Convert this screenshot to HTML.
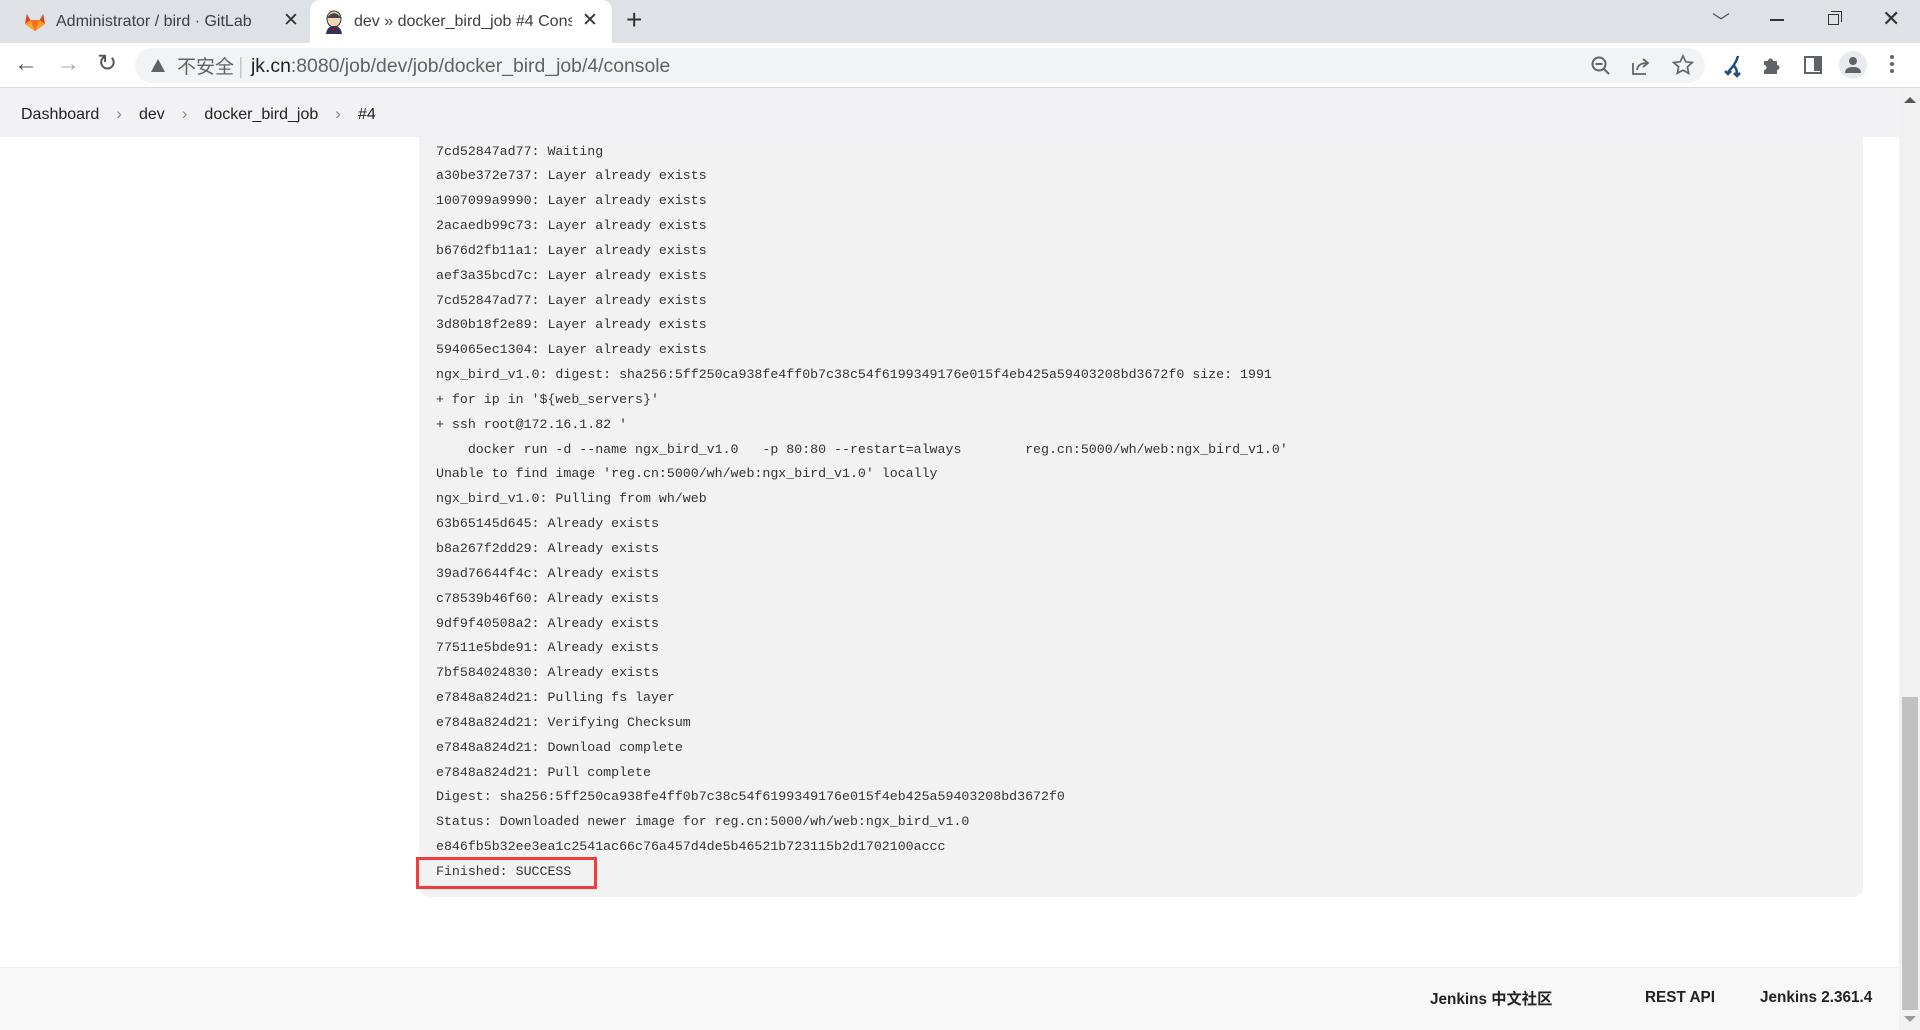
<!DOCTYPE html>
<html><head><meta charset="utf-8"><style>
*{margin:0;padding:0;box-sizing:border-box}
body{width:1920px;height:1030px;overflow:hidden;background:#fff;font-family:"Liberation Sans","Noto Sans CJK SC",sans-serif;position:relative}
.abs{position:absolute}
#tabs{left:0;top:0;width:1920px;height:43px;background:#dee1e6}
.tab{top:0;height:43px;font-size:16px;color:#3c4043;display:flex;align-items:center}
#atab{left:310px;width:302px;top:0;height:43px;background:#fff;border-radius:10px 10px 0 0}
#bar{left:0;top:43px;width:1920px;height:45px;background:#fff;border-bottom:1px solid #dadce0}
#omni{left:135px;top:48px;width:1570px;height:35px;background:#f1f3f4;border-radius:18px}
#crumb{left:0;top:88px;width:1900px;height:49px;background:#f2f2f5;font-size:16px;color:#222}
#console{left:419px;top:137px;width:1444px;height:760px;background:#f2f2f2;border-radius:0 0 10px 10px}
pre{position:absolute;left:436px;top:139.5px;font-family:"Liberation Mono","DejaVu Sans Mono",monospace;font-size:13.28px;line-height:24.85px;color:#333}
#footer{left:0;top:967px;width:1900px;height:63px;background:#f8f8f8;border-top:1px solid #eee}
.ft{font-weight:bold;font-size:15.3px;color:#222;top:989px}
#sb{left:1899px;top:88px;width:21px;height:942px;background:#f1f1f1}
#thumb{left:1902px;top:697px;width:16px;height:313px;background:#c1c1c1}
.sep{color:#888;margin:0 17px;font-size:17px}
</style></head><body>
<div id="tabs" class="abs"></div>
<div class="abs tab" style="left:24px;top:10px;height:24px">
<svg width="22" height="20" viewBox="0 0 24 22"><path d="M12 21 L1 13 L3 2 L7 9 H17 L21 2 L23 13Z" fill="#e24329"/><path d="M12 21 L7 9 H17Z" fill="#fc6d26"/><path d="M1 13 L7 9 L12 21Z" fill="#fca326"/><path d="M23 13 L17 9 L12 21Z" fill="#fca326"/></svg>
<span style="margin-left:10px">Administrator / bird · GitLab</span></div>
<div class="abs" style="left:283px;top:9px;font-size:19px;color:#333">✕</div>
<div id="atab" class="abs"></div>
<div class="abs tab" style="left:324px;top:0">
<svg width="20" height="24" viewBox="0 0 20 24"><ellipse cx="10" cy="9" rx="7" ry="8" fill="#f0d6b7" stroke="#333" stroke-width="1"/><path d="M3 8 Q10 -2 17 8" fill="#444"/><path d="M2 24 Q3 16 10 16 Q17 16 18 24Z" fill="#335"/><path d="M8 18 L12 18 L10 21Z" fill="#c00"/></svg>
<span style="margin-left:10px;width:218px;overflow:hidden;white-space:nowrap">dev » docker_bird_job #4 Console</span></div>
<div class="abs" style="left:582px;top:9px;font-size:19px;color:#333">✕</div>
<div class="abs" style="left:626px;top:4px;font-size:28px;color:#333">+</div>
<div class="abs" style="left:1712px;top:8px;font-size:18px;color:#555">﹀</div>
<div class="abs" style="left:1770px;top:19px;width:14px;height:1.5px;background:#333"></div>
<div class="abs" style="left:1828px;top:14px;width:11px;height:11px;border:1.5px solid #333"></div>
<div class="abs" style="left:1831px;top:11px;width:11px;height:11px;border-top:1.5px solid #333;border-right:1.5px solid #333"></div>
<div class="abs" style="left:1882px;top:6px;font-size:22px;color:#333">✕</div>
<div id="bar" class="abs"></div>
<div class="abs" style="left:14px;top:50px;font-size:24px;color:#555">←</div>
<div class="abs" style="left:56px;top:50px;font-size:24px;color:#aaa">→</div>
<div class="abs" style="left:97px;top:49px;font-size:24px;color:#555">↻</div>
<div id="omni" class="abs"></div>
<svg class="abs" style="left:150px;top:58px" width="16" height="15" viewBox="0 0 16 15"><path d="M8 1L15 14H1Z" fill="#5f6368"/></svg>
<div class="abs" style="left:177px;top:54px;font-size:19px;color:#5f6368;font-family:'Noto Sans CJK SC',sans-serif;line-height:24px">不安全 <span style="color:#bbb">|</span></div>
<div class="abs" style="left:251px;top:54px;font-size:19.4px;color:#202124;line-height:24px">jk.cn<span style="color:#5f6368">:8080/job/dev/job/docker_bird_job/4/console</span></div>
<svg class="abs" style="left:1590px;top:55px" width="22" height="22" viewBox="0 0 22 22" fill="none" stroke="#5f6368" stroke-width="2"><circle cx="9" cy="9" r="6.5"/><path d="M5.5 9h7M14 14l5 5"/></svg>
<svg class="abs" style="left:1630px;top:55px" width="22" height="22" viewBox="0 0 22 22" fill="none" stroke="#5f6368" stroke-width="1.8"><path d="M3 8v11h13M7 15q1-7 10-7M13 4l5 4-5 4"/></svg>
<svg class="abs" style="left:1672px;top:54px" width="22" height="22" viewBox="0 0 24 24" fill="none" stroke="#5f6368" stroke-width="1.8"><path d="M12 2l3 6.5 7 .8-5.2 4.8 1.4 7L12 17.6 5.8 21l1.4-7L2 9.3l7-.8z"/></svg>
<svg class="abs" style="left:1722px;top:54px" width="22" height="24" viewBox="0 0 22 24" fill="none" stroke="#1e4f7a" stroke-width="2.5"><path d="M16 2 Q14 10 6 18M11 11 Q15 14 15 20M3 17l3 3 3-3M12 19l3 3 3-3"/></svg>
<svg class="abs" style="left:1762px;top:55px" width="20" height="20" viewBox="0 0 20 20" fill="#5f6368"><path d="M2 6h4a2.5 2.5 0 015 0h4v4a2.5 2.5 0 010 5v4H2v-4a2.5 2.5 0 000-5z"/></svg>
<div class="abs" style="left:1804px;top:56px;width:18px;height:18px;border:2.5px solid #5f6368"><div style="margin-left:8px;width:6px;height:13px;background:#5f6368"></div></div>
<div class="abs" style="left:1839px;top:51px;width:28px;height:28px;border-radius:50%;background:#e8eaed"></div>
<svg class="abs" style="left:1843px;top:55px" width="20" height="20" viewBox="0 0 20 20" fill="#5f6368"><circle cx="10" cy="6" r="4"/><path d="M2 18q0-6 8-6t8 6z"/></svg>
<div class="abs" style="left:1890px;top:55px;width:4px;height:4px;border-radius:2px;background:#5f6368;box-shadow:0 7px 0 #5f6368,0 14px 0 #5f6368"></div>
<div id="crumb" class="abs"></div>
<div class="abs" style="left:21px;top:104px;font-size:16px;color:#222">Dashboard<span class="sep">›</span>dev<span class="sep">›</span>docker_bird_job<span class="sep">›</span>#4</div>
<div id="console" class="abs"></div>
<pre>7cd52847ad77: Waiting
a30be372e737: Layer already exists
1007099a9990: Layer already exists
2acaedb99c73: Layer already exists
b676d2fb11a1: Layer already exists
aef3a35bcd7c: Layer already exists
7cd52847ad77: Layer already exists
3d80b18f2e89: Layer already exists
594065ec1304: Layer already exists
ngx_bird_v1.0: digest: sha256:5ff250ca938fe4ff0b7c38c54f6199349176e015f4eb425a59403208bd3672f0 size: 1991
+ for ip in '${web_servers}'
+ ssh root@172.16.1.82 '
    docker run -d --name ngx_bird_v1.0   -p 80:80 --restart=always        reg.cn:5000/wh/web:ngx_bird_v1.0'
Unable to find image 'reg.cn:5000/wh/web:ngx_bird_v1.0' locally
ngx_bird_v1.0: Pulling from wh/web
63b65145d645: Already exists
b8a267f2dd29: Already exists
39ad76644f4c: Already exists
c78539b46f60: Already exists
9df9f40508a2: Already exists
77511e5bde91: Already exists
7bf584024830: Already exists
e7848a824d21: Pulling fs layer
e7848a824d21: Verifying Checksum
e7848a824d21: Download complete
e7848a824d21: Pull complete
Digest: sha256:5ff250ca938fe4ff0b7c38c54f6199349176e015f4eb425a59403208bd3672f0
Status: Downloaded newer image for reg.cn:5000/wh/web:ngx_bird_v1.0
e846fb5b32ee3ea1c2541ac66c76a457d4de5b46521b723115b2d1702100accc
Finished: SUCCESS</pre>
<div class="abs" style="left:416px;top:857px;width:181px;height:32px;border:3px solid #f03c3c"></div>
<div id="footer" class="abs"></div>
<div class="abs ft" style="left:1430px;top:987px">Jenkins 中文社区</div>
<div class="abs ft" style="left:1645px">REST API</div>
<div class="abs ft" style="left:1760px">Jenkins 2.361.4</div>
<div id="sb" class="abs"></div>
<div id="thumb" class="abs"></div>
<div class="abs" style="left:1904px;top:97px;width:0;height:0;border-left:6px solid transparent;border-right:6px solid transparent;border-bottom:6px solid #555"></div>
<div class="abs" style="left:1904px;top:1016px;width:0;height:0;border-left:6px solid transparent;border-right:6px solid transparent;border-top:6px solid #999"></div>
</body></html>
